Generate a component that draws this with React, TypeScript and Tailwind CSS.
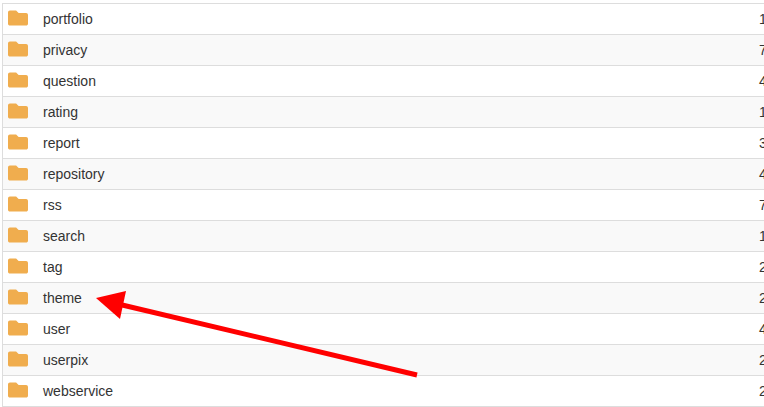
import React from "react";
import { FaFolder } from "react-icons/fa";

const rows: [string, string][] = [
  ["portfolio", "1"],
  ["privacy", "7"],
  ["question", "4"],
  ["rating", "1"],
  ["report", "3"],
  ["repository", "4"],
  ["rss", "7"],
  ["search", "1"],
  ["tag", "2"],
  ["theme", "2"],
  ["user", "4"],
  ["userpix", "2"],
  ["webservice", "2"],
];

export default function App() {
  return (
    <div className="relative h-[407px] w-[764px] overflow-hidden bg-white pl-[2px] pt-[3px] font-['Liberation_Sans',Arial,sans-serif] text-[14px] text-[#333333]">
      <div className="w-[800px] border-l border-t border-[#dddddd]">
        {rows.map(([name, n], i) => (
          <div
            key={name}
            className={`flex h-[31px] items-center border-b border-[#dddddd] ${i % 2 === 1 ? "bg-[#f9f9f9]" : "bg-white"}`}
          >
            <div className="flex w-[40px] shrink-0 pl-[5px]">
              <FaFolder className="-mt-[2px] h-[20px] w-[20px] text-[#f0ad4e]" />
            </div>
            <div className="w-[716px] shrink-0">{name}</div>
            <div>{n}</div>
          </div>
        ))}
      </div>
      <svg className="absolute left-0 top-0" width="764" height="407" viewBox="0 0 764 407">
        <line x1="417" y1="375" x2="118" y2="304" stroke="#ff0000" strokeWidth="5" />
        <polygon points="96,298 126,291 120,319" fill="#ff0000" />
      </svg>
    </div>
  );
}
